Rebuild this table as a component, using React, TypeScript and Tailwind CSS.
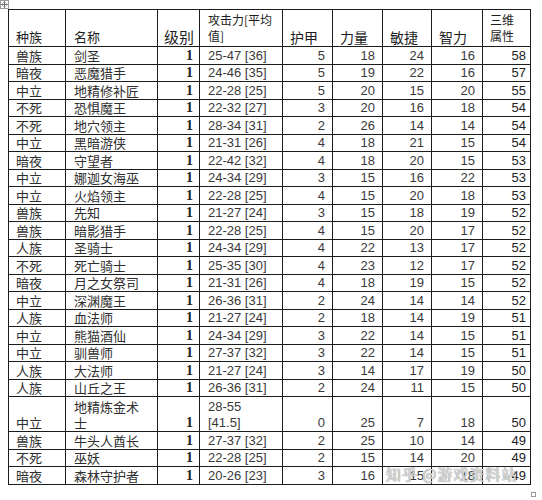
import React from "react";

type Row = {
  race: string;
  name: React.ReactNode;
  atk: React.ReactNode;
  armor: number;
  str: number;
  agi: number;
  int: number;
  total: number;
  tall?: boolean;
};

const rows: Row[] = [
  { race: "兽族", name: "剑圣", atk: "25-47 [36]", armor: 5, str: 18, agi: 24, int: 16, total: 58 },
  { race: "暗夜", name: "恶魔猎手", atk: "24-46 [35]", armor: 5, str: 19, agi: 22, int: 16, total: 57 },
  { race: "中立", name: "地精修补匠", atk: "22-28 [25]", armor: 5, str: 20, agi: 15, int: 20, total: 55 },
  { race: "不死", name: "恐惧魔王", atk: "22-32 [27]", armor: 3, str: 20, agi: 16, int: 18, total: 54 },
  { race: "不死", name: "地穴领主", atk: "28-34 [31]", armor: 2, str: 26, agi: 14, int: 14, total: 54 },
  { race: "中立", name: "黑暗游侠", atk: "21-31 [26]", armor: 4, str: 18, agi: 21, int: 15, total: 54 },
  { race: "暗夜", name: "守望者", atk: "22-42 [32]", armor: 4, str: 18, agi: 20, int: 15, total: 53 },
  { race: "中立", name: "娜迦女海巫", atk: "24-34 [29]", armor: 3, str: 15, agi: 16, int: 22, total: 53 },
  { race: "中立", name: "火焰领主", atk: "22-28 [25]", armor: 4, str: 15, agi: 20, int: 18, total: 53 },
  { race: "兽族", name: "先知", atk: "21-27 [24]", armor: 3, str: 15, agi: 18, int: 19, total: 52 },
  { race: "兽族", name: "暗影猎手", atk: "22-28 [25]", armor: 4, str: 15, agi: 20, int: 17, total: 52 },
  { race: "人族", name: "圣骑士", atk: "24-34 [29]", armor: 4, str: 22, agi: 13, int: 17, total: 52 },
  { race: "不死", name: "死亡骑士", atk: "25-35 [30]", armor: 4, str: 23, agi: 12, int: 17, total: 52 },
  { race: "暗夜", name: "月之女祭司", atk: "21-31 [26]", armor: 4, str: 18, agi: 19, int: 15, total: 52 },
  { race: "中立", name: "深渊魔王", atk: "26-36 [31]", armor: 2, str: 24, agi: 14, int: 14, total: 52 },
  { race: "人族", name: "血法师", atk: "21-27 [24]", armor: 2, str: 18, agi: 14, int: 19, total: 51 },
  { race: "中立", name: "熊猫酒仙", atk: "24-34 [29]", armor: 3, str: 22, agi: 14, int: 15, total: 51 },
  { race: "中立", name: "驯兽师", atk: "27-37 [32]", armor: 3, str: 22, agi: 14, int: 15, total: 51 },
  { race: "人族", name: "大法师", atk: "21-27 [24]", armor: 3, str: 14, agi: 17, int: 19, total: 50 },
  { race: "人族", name: "山丘之王", atk: "26-36 [31]", armor: 2, str: 24, agi: 11, int: 15, total: 50 },
  {
    race: "中立",
    name: (
      <>
        地精炼金术
        <br />士
      </>
    ),
    atk: (
      <>
        28-55
        <br />
        [41.5]
      </>
    ),
    armor: 0,
    str: 25,
    agi: 7,
    int: 18,
    total: 50,
    tall: true,
  },
  { race: "兽族", name: "牛头人酋长", atk: "27-37 [32]", armor: 2, str: 25, agi: 10, int: 14, total: 49 },
  { race: "不死", name: "巫妖", atk: "22-28 [25]", armor: 2, str: 15, agi: 14, int: 20, total: 49 },
  { race: "暗夜", name: "森林守护者", atk: "20-26 [23]", armor: 3, str: 16, agi: 15, int: 18, total: 49 },
];

const cjk = "font-['Noto_Sans_CJK_SC',sans-serif]";
const num = "font-['Liberation_Sans',sans-serif]";
const cell = "border border-[#1c1c1c] align-bottom p-0 leading-[16px]";

const MoveHandle = () => (
  <svg width="9" height="9" viewBox="0 0 9 9" className="absolute left-0 top-0">
    <rect x="0.5" y="0.5" width="8" height="8" fill="#fff" stroke="#9a9a9a" />
    <path d="M4.5 1.5v6M1.5 4.5h6M3.5 2.5l1-1 1 1M3.5 6.5l1 1 1-1M2.5 3.5l-1 1 1 1M6.5 3.5l1 1-1 1" stroke="#555" strokeWidth="0.8" fill="none" />
  </svg>
);

export default function App() {
  return (
    <div className="relative w-[542px] h-[500px] bg-white overflow-hidden">
      <MoveHandle />
      <div className="pl-[8px] pt-[9px]">
        <table className="table-fixed border-collapse w-[522px] text-[#2e2e2e]">
          <colgroup>
            <col className="w-[57px]" />
            <col className="w-[92px]" />
            <col className="w-[42px]" />
            <col className="w-[83px]" />
            <col className="w-[50px]" />
            <col className="w-[50px]" />
            <col className="w-[49px]" />
            <col className="w-[51px]" />
            <col className="w-[48px]" />
          </colgroup>
          <thead>
            <tr className="h-[37px] text-[#1e1e1e]">
              <th className={`${cell} ${cjk} text-[13px] font-normal text-left pl-[7px] pb-[1px]`}>种族</th>
              <th className={`${cell} ${cjk} text-[13px] font-normal text-left pl-[8px] pb-[1px]`}>名称</th>
              <th className={`${cell} ${cjk} text-[15px] font-normal text-right pr-[5px] pb-[1px]`}>级别</th>
              <th className={`${cell} ${cjk} text-[12px] font-normal text-left pl-[8px] leading-[14px] pb-[2px]`}>
                攻击力[平均
                <br />
                值]
              </th>
              <th className={`${cell} ${cjk} text-[14px] font-normal text-left pl-[7px] pb-[1px]`}>护甲</th>
              <th className={`${cell} ${cjk} text-[14px] font-normal text-left pl-[7px] pb-[1px]`}>力量</th>
              <th className={`${cell} ${cjk} text-[14px] font-normal text-left pl-[7px] pb-[1px]`}>敏捷</th>
              <th className={`${cell} ${cjk} text-[14px] font-normal text-left pl-[7px] pb-[1px]`}>智力</th>
              <th className={`${cell} ${cjk} text-[12px] font-normal text-left pl-[7px] leading-[14px] pb-[2px]`}>
                三维
                <br />
                属性
              </th>
            </tr>
          </thead>
          <tbody>
            {rows.map((r, i) => (
              <tr key={i} className={r.tall ? "h-[35px]" : "h-[17.5px]"}>
                <td className={`${cell} ${cjk} text-[13px] pl-[7px]`}>{r.race}</td>
                <td className={`${cell} ${cjk} text-[13px] pl-[8px]`}>{r.name}</td>
                <td className={`${cell} font-['Liberation_Serif',serif] font-bold text-[14px] text-right pr-[6px] text-[#222]`}>1</td>
                <td className={`${cell} ${num} text-[13px] pl-[8px] text-[#3a3a3a]`}>{r.atk}</td>
                <td className={`${cell} ${num} text-[13px] text-right pr-[7px] text-[#3a3a3a]`}>{r.armor}</td>
                <td className={`${cell} ${num} text-[13px] text-right pr-[7px] text-[#3a3a3a]`}>{r.str}</td>
                <td className={`${cell} ${num} text-[13px] text-right pr-[7px] text-[#3a3a3a]`}>{r.agi}</td>
                <td className={`${cell} ${num} text-[13px] text-right pr-[7px] text-[#3a3a3a]`}>{r.int}</td>
                <td className={`${cell} ${num} text-[13px] text-right pr-[4px] text-[#222]`}>{r.total}</td>
              </tr>
            ))}
          </tbody>
        </table>
      </div>
      <div className={`absolute left-[386px] top-[465px] ${cjk} text-[15px] leading-[18px] text-white/70 [text-shadow:0_0_1px_#888,0_0_1px_#888] tracking-[1px]`}>
        知乎 @游戏资料站
      </div>
      <div className="absolute left-[531px] top-[492px] w-[5px] h-[5px] border border-[#999] bg-white" />
    </div>
  );
}
